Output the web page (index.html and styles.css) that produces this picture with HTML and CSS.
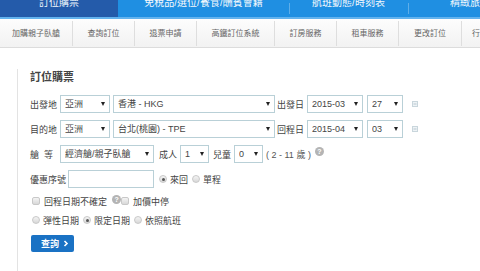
FILE: index.html
```html
<!DOCTYPE html>
<html lang="zh-Hant">
<head>
<meta charset="utf-8">
<title>訂位購票</title>
<link rel="stylesheet" href="styles.css">
</head>
<body>
<nav class="topnav">
  <a class="t1" href="#">訂位購票</a>
  <a class="t2" href="#">免稅品/選位/餐食/酬賓會籍</a>
  <a class="t3 sep" href="#">航班動態/時刻表</a>
  <a class="t4 sep" href="#">精緻旅遊</a>
</nav>
<nav class="subnav">
  <a class="s1" href="#">加購親子臥艙</a>
  <a class="s2" href="#">查詢訂位</a>
  <a class="s3" href="#">退票申請</a>
  <a class="s4" href="#">高鐵訂位系統</a>
  <a class="s5" href="#">訂房服務</a>
  <a class="s6" href="#">租車服務</a>
  <a class="s7" href="#">更改訂位</a>
  <a class="s8" href="#">行程查詢</a>
</nav>
<main class="panel">
  <h1 class="title">訂位購票</h1>
  <form class="form">
    <div class="row">
      <span class="lbl l3">出發地</span>
      <span class="sel w-region"><select><option>亞洲</option></select></span>
      <span class="sel w-city"><select><option>香港 - HKG</option></select></span>
      <span class="lbl l-date">出發日</span>
      <span class="sel w-month"><select><option>2015-03</option></select></span>
      <span class="sel w-day"><select><option>27</option></select></span>
      <span class="cal"><svg width="6" height="6" viewBox="0 0 6 6"><rect x="0.5" y="0.5" width="5" height="5" fill="#eef3f6" stroke="#c9d6dc"/><rect x="1.5" y="2.5" width="3" height="1" fill="#b8c8d0"/></svg></span>
    </div>
    <div class="row">
      <span class="lbl l3">目的地</span>
      <span class="sel w-region"><select><option>亞洲</option></select></span>
      <span class="sel w-city"><select><option>台北(桃園) - TPE</option></select></span>
      <span class="lbl l-date">回程日</span>
      <span class="sel w-month"><select><option>2015-04</option></select></span>
      <span class="sel w-day"><select><option>03</option></select></span>
      <span class="cal"><svg width="6" height="6" viewBox="0 0 6 6"><rect x="0.5" y="0.5" width="5" height="5" fill="#eef3f6" stroke="#c9d6dc"/><rect x="1.5" y="2.5" width="3" height="1" fill="#b8c8d0"/></svg></span>
    </div>
    <div class="row">
      <span class="lbl l3">艙&nbsp;&nbsp;等</span>
      <span class="sel w-class"><select><option>經濟艙/親子臥艙</option></select></span>
      <span class="lbl l-pax">成人</span>
      <span class="sel w-num"><select><option>1</option></select></span>
      <span class="lbl l-pax">兒童</span>
      <span class="sel w-num"><select><option>0</option></select></span>
      <span class="lbl age">( 2 - 11 歲 )</span>
      <span class="help">?</span>
    </div>
    <div class="row">
      <span class="lbl l4">優惠序號</span>
      <input class="code" type="text">
      <label class="opt"><span class="radio on"></span>來回</label>
      <label class="opt"><span class="radio"></span>單程</label>
    </div>
    <div class="row small">
      <label class="opt first"><span class="check"></span>回程日期不確定</label><span class="help sm">?</span>
      <label class="opt"><span class="check"></span>加價中停</label>
    </div>
    <div class="row small">
      <label class="opt first"><span class="radio"></span>彈性日期</label>
      <label class="opt"><span class="radio on"></span>限定日期</label>
      <label class="opt"><span class="radio"></span>依照航班</label>
    </div>
    <button class="btn" type="button">查詢 <svg width="6" height="7" viewBox="0 0 6 7"><path d="M1.5 1 L4 3.5 L1.5 6" fill="none" stroke="#fff" stroke-width="1.6"/></svg></button>
  </form>
</main>
</body>
</html>
```
FILE: styles.css
```css
* { box-sizing: border-box; }
html, body { margin: 0; padding: 0; }
body {
  font-family: "Liberation Sans", "Noto Sans CJK TC", sans-serif;
  background: #fff;
  color: #444;
  width: 480px;
  height: 271px;
  overflow: hidden;
}
a { text-decoration: none; }

.topnav {
  display: flex;
  height: 19px;
  background: #1f8fe2;
  border-bottom: 2px solid #63b3ee;
  overflow: hidden;
}
.topnav a {
  flex-shrink: 0;
  color: #fff;
  font-size: 10px;
  line-height: 6px;
  text-align: center;
  position: relative;
  opacity: 0.95;
}
.topnav .t1 { width: 118px; background: #2559a8; }
.topnav .t2 { width: 171px; }
.topnav .t3 { width: 119px; }
.topnav .t4 { width: 124px; }
.topnav .sep::before {
  content: "";
  position: absolute;
  left: 0;
  top: 3px;
  bottom: 3px;
  border-left: 1px solid #62b0ea;
}

.subnav {
  display: flex;
  height: 29px;
  background: linear-gradient(#fdfdfd, #f2f2f2);
  border-bottom: 1px solid #dcdcdc;
  overflow: hidden;
  align-items: center;
}
.subnav a {
  flex-shrink: 0;
  height: 25px;
  line-height: 25px;
  font-size: 8px;
  color: #666;
  text-align: center;
  border-right: 1px solid #dedede;
}
.subnav .s1 { width: 73px; }
.subnav .s2 { width: 62px; }
.subnav .s3 { width: 62px; }
.subnav .s4 { width: 78px; }
.subnav .s5 { width: 62px; }
.subnav .s6 { width: 62px; }
.subnav .s7 { width: 63px; }
.subnav .s8 { width: 60px; text-align: left; padding-left: 10px; border-right: 0; }

.panel {
  margin: 21px 0 0 17px;
  border-left: 1px solid #e3e3e3;
  padding: 1px 0 0 12px;
  height: 210px;
}
.title {
  margin: 0 0 11px;
  font-size: 11px;
  line-height: 14px;
  font-weight: bold;
  color: #444;
}

.row {
  display: flex;
  align-items: center;
  height: 18px;
  margin-bottom: 7px;
  font-size: 9px;
  color: #444;
}
.row.small { height: 12px; }

.lbl { white-space: nowrap; }
.l3 { width: 29px; margin-right: 1px; }
.l4 { width: 38px; }
.l-date { margin: 0 2px 0 2px; width: 28px; }
.l-pax { margin: 0 3px 0 4px; }
.age { margin-left: 3px; color: #555; }

.sel {
  position: relative;
  display: inline-block;
  height: 18px;
  margin-right: 3px;
}
.sel select {
  -webkit-appearance: none;
  appearance: none;
  width: 100%;
  height: 18px;
  border: 1px solid #b9d0d7;
  border-radius: 0;
  background: #fff;
  font-family: "Liberation Sans", "Noto Sans CJK TC", sans-serif;
  font-size: 9px;
  color: #444;
  padding: 0 0 0 4px;
  margin: 0;
  outline: none;
}
.sel::after {
  content: "";
  position: absolute;
  right: 5px;
  top: 7px;
  border-left: 2px solid transparent;
  border-right: 2px solid transparent;
  border-top: 4px solid #222;
  pointer-events: none;
}
.w-region { width: 50px; }
.w-city { width: 162px; margin-right: 0; }
.w-month { width: 56px; margin-right: 4px; }
.w-day { width: 36px; }
.w-class { width: 94px; margin-right: 1px; }
.w-num { width: 29px; margin-right: 0; }

.cal { display: inline-flex; margin-left: 6px; }

.help {
  display: inline-flex;
  align-items: center;
  justify-content: center;
  width: 9px;
  height: 9px;
  border-radius: 50%;
  background: #b4b4b4;
  color: #fff;
  font-size: 7px;
  font-weight: bold;
  margin: -6px 0 0 4px;
}
.help.sm { margin: -4px 0 0 1px; }

.code {
  width: 86px;
  height: 18px;
  border: 1px solid #b9d0d7;
  margin: 0 5px 0 0;
}

.opt {
  display: inline-flex;
  align-items: center;
  white-space: nowrap;
  margin-right: 4px;
}
.opt.first { margin-left: 2px; }
.radio, .check {
  display: inline-block;
  width: 8px;
  height: 8px;
  margin-right: 3px;
  border: 1px solid #c8c8c8;
  background: linear-gradient(#f4f4f4, #d8d8d8);
  position: relative;
}
.radio { border-radius: 50%; }
.check { border-radius: 2px; margin-right: 4px; }
.radio.on::after {
  content: "";
  position: absolute;
  left: 1.5px;
  top: 1.5px;
  width: 3px;
  height: 3px;
  border-radius: 50%;
  background: #555;
}

.btn {
  display: inline-flex;
  align-items: center;
  gap: 4px;
  margin: 2px 0 0 1px;
  height: 17px;
  width: 43px;
  padding: 0 0 0 10px;
  border: 0;
  border-radius: 2px;
  background: #1a72c4;
  color: #fff;
  font-family: "Liberation Sans", "Noto Sans CJK TC", sans-serif;
  font-size: 9px;
  font-weight: bold;
}
```
